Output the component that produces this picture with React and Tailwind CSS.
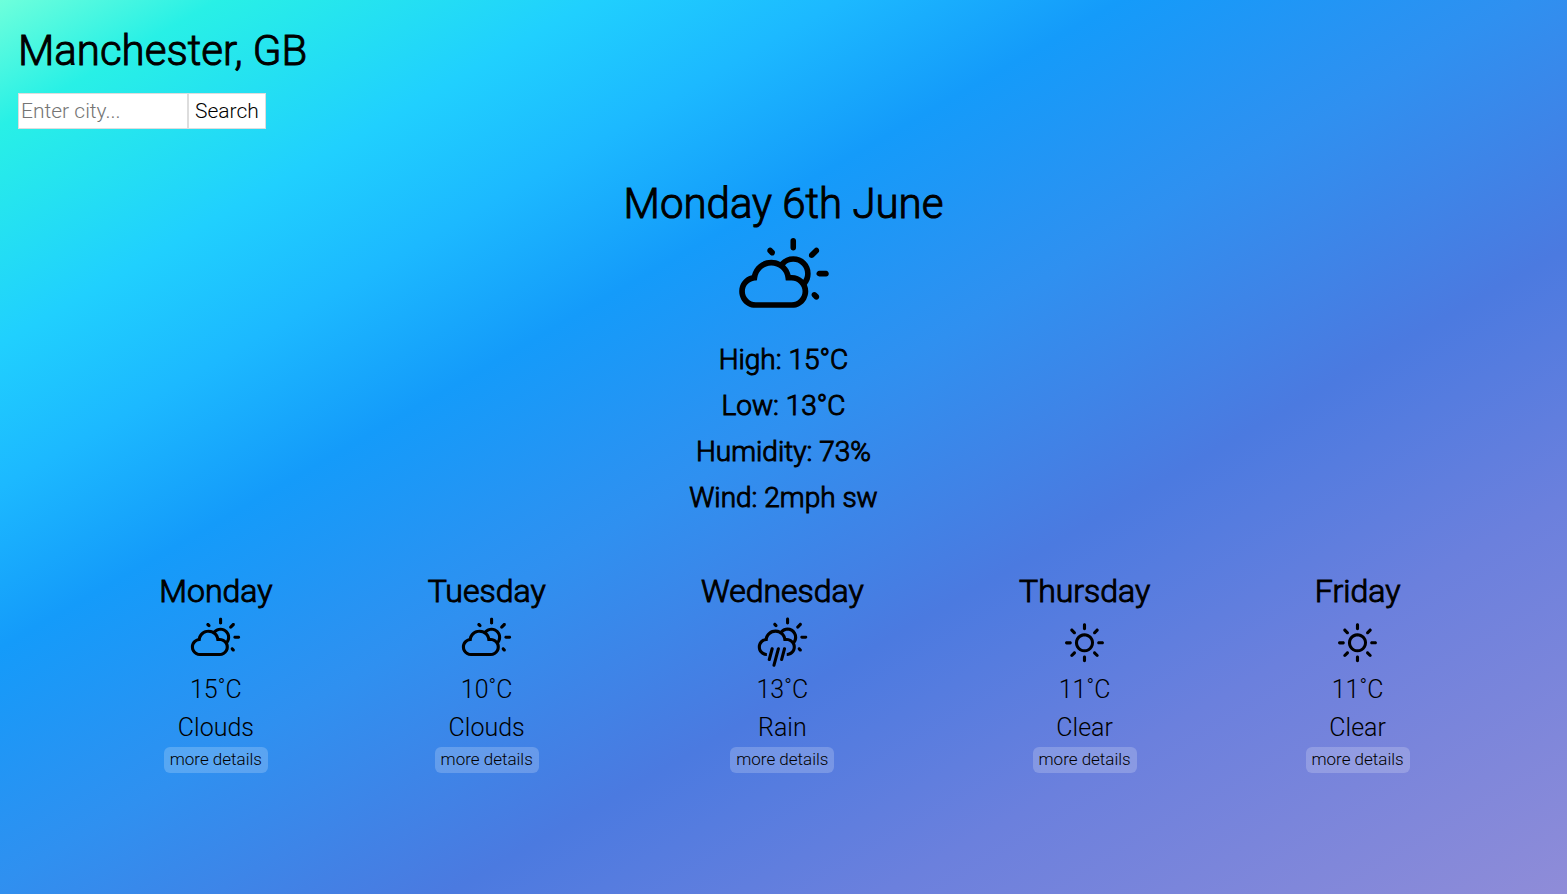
import { WiDayCloudy, WiDayRain, WiDaySunny } from "react-icons/wi";

const forecast = [
  { day: "Monday", Icon: WiDayCloudy, temp: "15˚C", summary: "Clouds" },
  { day: "Tuesday", Icon: WiDayCloudy, temp: "10˚C", summary: "Clouds" },
  { day: "Wednesday", Icon: WiDayRain, temp: "13˚C", summary: "Rain" },
  { day: "Thursday", Icon: WiDaySunny, temp: "11˚C", summary: "Clear" },
  { day: "Friday", Icon: WiDaySunny, temp: "11˚C", summary: "Clear" },
];

const today = ["High: 15°C", "Low: 13°C", "Humidity: 73%", "Wind: 2mph sw"];

function DayCard({ day, Icon, temp, summary }) {
  return (
    <li className="flex flex-col items-center">
      <h2 className="text-[32px] leading-[38px] [-webkit-text-stroke:1px_black]">{day}</h2>
      <Icon className="mt-1.5 size-[55px]" aria-hidden="true" />
      <p className="text-[25px] leading-[38px]">{temp}</p>
      <p className="text-[25px] leading-[38px]">{summary}</p>
      <button type="button" className="rounded-md bg-white/20 px-1.5 pb-0.5 text-[17px] leading-6">
        more details
      </button>
    </li>
  );
}

export default function App() {
  return (
    <div className="min-h-screen bg-[linear-gradient(150deg,#6effdb,#28f0e6_7%,#20d0fe_19%,#1cb9ff_27%,#149bfa_36%,#2f90f0_49%,#4b7ae0_64%,#6b80dd_78%,#8f8cd8)] pt-[25px] font-['Roboto',sans-serif] font-light text-black">
      <header className="px-[18px]">
        <h1 className="text-[42px] leading-[52px] [-webkit-text-stroke:1px_black]">Manchester, GB</h1>
        <form className="mt-4 flex h-9" onSubmit={(e) => e.preventDefault()}>
          <input
            type="text"
            aria-label="City"
            placeholder="Enter city..."
            className="w-[170px] border border-[#dddddd] bg-white px-0.5 pt-0.5 text-[21px] placeholder:text-[#757575]"
          />
          <button type="submit" className="border border-[#dddddd] bg-white px-1.5 pt-0.5 text-[21px]">
            Search
          </button>
        </form>
      </header>
      <main>
        <section className="mt-[49px] flex flex-col items-center">
          <h2 className="text-[42px] leading-[52px] [-webkit-text-stroke:1px_black]">Monday 6th June</h2>
          <WiDayCloudy className="mt-[5px] mb-0.5 size-[100px]" aria-hidden="true" />
          <div className="text-center text-[28px] leading-[46px] [-webkit-text-stroke:1px_black]">
            {today.map((line) => (
              <p key={line}>{line}</p>
            ))}
          </div>
        </section>
        <ul className="mt-[51px] flex justify-evenly pr-0.5 pl-1">
          {forecast.map((entry) => (
            <DayCard key={entry.day} {...entry} />
          ))}
        </ul>
      </main>
    </div>
  );
}
